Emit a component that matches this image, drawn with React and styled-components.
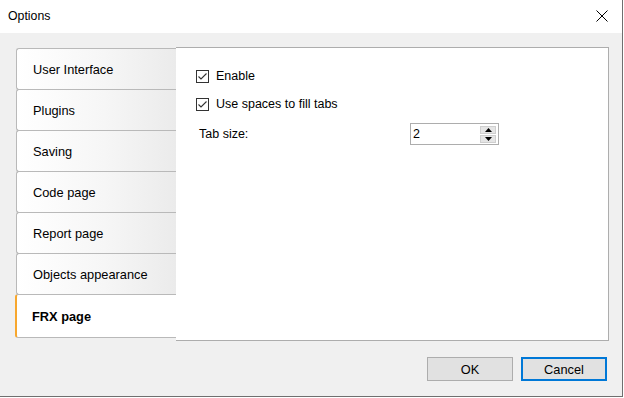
import React from "react";
import styled, { createGlobalStyle } from "styled-components";

const Global = createGlobalStyle`
  html, body { margin: 0; padding: 0; background: #ffffff; }
  body { font-family: "Liberation Sans", Arial, sans-serif; }
  * { box-sizing: border-box; }
`;

const Window = styled.div`
  width: 623px;
  height: 397px;
  display: flex;
  flex-direction: column;
  border-right: 1px solid #6f6f6f;
  border-bottom: 1px solid #6f6f6f;
  font-family: "Liberation Sans", Arial, sans-serif;
  color: #000;
`;

const TitleBar = styled.div`
  height: 33px;
  flex: none;
  background: #ffffff;
  display: flex;
  align-items: center;
  justify-content: space-between;
  padding: 0 14px 1px 8px;
`;

const Title = styled.span`
  font-size: 12.3px;
`;

const CloseBtn = styled.span`
  width: 12px;
  height: 12px;
  display: flex;
`;

const Client = styled.div`
  flex: 1;
  background: #f0f0f0;
  display: flex;
  flex-direction: column;
  padding: 14px 13px 15px 15px;
`;

const MainRow = styled.div`
  display: flex;
  height: 294px;
`;

const TabList = styled.div`
  width: 161px;
  flex: none;
  display: flex;
  flex-direction: column;
  padding-top: 1px;
`;

const Tab = styled.div`
  height: ${(p) => (p.$active ? 44 : 42)}px;
  margin-top: -1px;
  margin-left: ${(p) => (p.$active ? 0 : 1)}px;
  display: flex;
  align-items: center;
  padding-left: ${(p) => (p.$active ? 15 : 16)}px;
  font-size: 12.8px;
  font-weight: ${(p) => (p.$active ? 700 : 400)};
  border: 1px solid #b9b9b9;
  border-right: none;
  border-left: ${(p) => (p.$active ? "2px solid #f7a72e" : "1px solid #b9b9b9")};
  border-radius: 3px 0 0 3px;
  background: ${(p) =>
    p.$active ? "#ffffff" : "linear-gradient(to right, #ffffff 0%, #f6f6f6 55%, #ebebeb 100%)"};
  position: relative;
  z-index: ${(p) => (p.$active ? 1 : 0)};
  &:first-child { margin-top: 0; }
`;

const Panel = styled.div`
  flex: 1;
  background: #ffffff;
  border: 1px solid #adadad;
  border-left: none;
  padding: 21px 20px 0 20px;
  display: flex;
  flex-direction: column;
  gap: 14px;
`;

const CheckRow = styled.label`
  display: flex;
  align-items: center;
  gap: 7px;
  height: 14px;
  font-size: 12.5px;
`;

const Box = styled.span`
  width: 13px;
  height: 13px;
  border: 1px solid #333333;
  background: #fff;
  display: flex;
  align-items: center;
  justify-content: center;
`;

const FieldRow = styled.div`
  display: flex;
  align-items: center;
  margin-top: -2px;
  font-size: 12.5px;
`;

const FieldLabel = styled.span`
  width: 211px;
  margin-left: 3px;
`;

const Spin = styled.div`
  width: 89px;
  height: 22px;
  border: 1px solid #adadad;
  background: #fff;
  display: flex;
  align-items: center;
  padding: 0 2px 0 2px;
`;

const SpinValue = styled.span`
  flex: 1;
  font-size: 12.5px;
`;

const SpinButtons = styled.div`
  width: 16px;
  height: 17px;
  display: flex;
  flex-direction: column;
  gap: 1px;
`;

const SpinBtn = styled.span`
  flex: 1;
  background: #e5e5e5;
  border: 1px solid #cfcfcf;
  display: flex;
  align-items: center;
  justify-content: center;
`;

const ButtonBar = styled.div`
  display: flex;
  justify-content: flex-end;
  gap: 8px;
  margin-top: 16px;
  padding-right: 2px;
`;

const Button = styled.button`
  width: 86px;
  height: 24px;
  background: #e1e1e1;
  border: ${(p) => (p.$focused ? "2px solid #0078d7" : "1px solid #adadad")};
  font-family: "Liberation Sans", Arial, sans-serif;
  font-size: 12.8px;
  color: #000;
  padding: 0;
`;

const Check = () => (
  <svg width="11" height="11" viewBox="0 0 11 11">
    <polyline points="1.5,5.5 4,8 9.5,2.5" fill="none" stroke="#333" strokeWidth="1.1" />
  </svg>
);

const Tri = ({ up }) => (
  <svg width="7" height="4" viewBox="0 0 7 4">
    <polygon points={up ? "0,4 7,4 3.5,0" : "0,0 7,0 3.5,4"} fill="#000" />
  </svg>
);

const tabs = [
  "User Interface",
  "Plugins",
  "Saving",
  "Code page",
  "Report page",
  "Objects appearance",
  "FRX page",
];

export default function App() {
  return (
    <>
      <Global />
      <Window>
        <TitleBar>
          <Title>Options</Title>
          <CloseBtn>
            <svg width="12" height="12" viewBox="0 0 12 12">
              <path d="M0.5 0.5 L11.5 11.5 M11.5 0.5 L0.5 11.5" stroke="#000" strokeWidth="1" />
            </svg>
          </CloseBtn>
        </TitleBar>
        <Client>
          <MainRow>
            <TabList>
              {tabs.map((t) => (
                <Tab key={t} $active={t === "FRX page"}>
                  {t}
                </Tab>
              ))}
            </TabList>
            <Panel>
              <CheckRow>
                <Box><Check /></Box>
                Enable
              </CheckRow>
              <CheckRow>
                <Box><Check /></Box>
                Use spaces to fill tabs
              </CheckRow>
              <FieldRow>
                <FieldLabel>Tab size:</FieldLabel>
                <Spin>
                  <SpinValue>2</SpinValue>
                  <SpinButtons>
                    <SpinBtn><Tri up /></SpinBtn>
                    <SpinBtn><Tri /></SpinBtn>
                  </SpinButtons>
                </Spin>
              </FieldRow>
            </Panel>
          </MainRow>
          <ButtonBar>
            <Button>OK</Button>
            <Button $focused>Cancel</Button>
          </ButtonBar>
        </Client>
      </Window>
    </>
  );
}
